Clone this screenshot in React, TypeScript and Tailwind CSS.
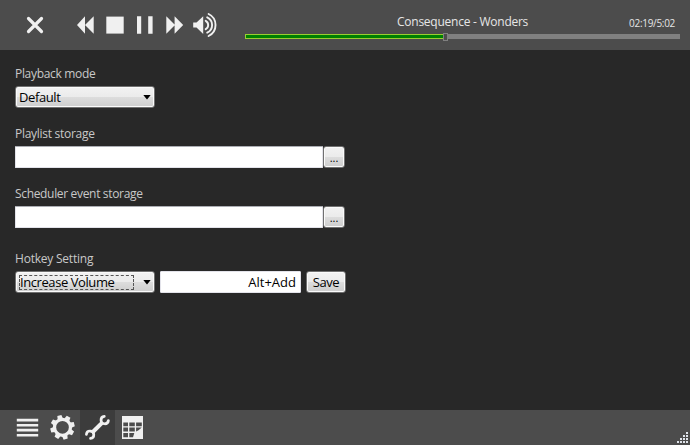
import React from "react";

const GEAR_ANGLES = [30, 75, 120, 165, 210, 255, 300, 345];

function Glyph({ w, h, children }: { w: number; h: number; children: React.ReactNode }) {
  return (
    <svg width={w} height={h} viewBox={`0 0 ${w} ${h}`} fill="#f0f0f0" className="block shrink-0">
      {children}
    </svg>
  );
}

function Label({ children, className }: { children: React.ReactNode; className: string }) {
  return <div className={`h-4 text-[12px] leading-4 whitespace-nowrap text-[#c8c8c8] ${className}`}>{children}</div>;
}

const FACE =
  "rounded-[3px] border border-[#707070] bg-[linear-gradient(#f2f2f2_0%,#ebebeb_50%,#dddddd_50%,#cdcdcd_100%)] shadow-[inset_0_0_0_1px_#fafafa] text-black";

function Combo({ text, focused, className }: { text: string; focused?: boolean; className: string }) {
  return (
    <div className={`flex h-[22px] w-[140px] items-center justify-between pr-[3px] pl-[3px] text-[13px] leading-4 ${FACE}`}>
      <div className={`flex h-[15px] w-[115px] items-center border border-dashed whitespace-nowrap ${focused ? "border-[#555]" : "border-transparent"}`}>
        <span className={className}>{text}</span>
      </div>
      <svg width="8" height="5" viewBox="0 0 8 5" className="block">
        <path d="M0.3 0H7.7L4 4.6Z" fill="#000" />
      </svg>
    </div>
  );
}

function PathRow() {
  return (
    <div className="flex h-[22px]">
      <div className="w-[308px] rounded-[1px] border border-[#e3e3ea] border-t-[#abadb3] bg-white" />
      <button className={`w-[22px] pt-px text-[11px] leading-5 ${FACE}`}>...</button>
    </div>
  );
}

export default function App() {
  return (
    <div className="flex h-[445px] w-[690px] flex-col overflow-hidden bg-[#282828] font-['Open_Sans','Noto_Sans',sans-serif]">
      <header className="flex h-[50px] shrink-0 bg-[#4c4c4c]">
        <div className="flex w-[245px] pl-5">
          <Glyph w={50} h={50}>
            <path d="M8.5 18.5L21.5 31.5M21.5 18.5L8.5 31.5" stroke="#f0f0f0" strokeWidth="3.2" strokeLinecap="round" />
          </Glyph>
          <Glyph w={30} h={50}>
            <path d="M7 25L15 16.3V33.7ZM15 25L23.7 16.3V33.7Z" />
          </Glyph>
          <Glyph w={30} h={50}>
            <path d="M6.3 16.6H23.7V33.6H6.3Z" />
          </Glyph>
          <Glyph w={30} h={50}>
            <path d="M7 16.3H11.2V33.7H7ZM18.2 16.3H22.6V33.7H18.2Z" />
          </Glyph>
          <Glyph w={30} h={50}>
            <path d="M6.3 16.3L15 25L6.3 33.7ZM14.6 16.3L23.2 25L14.6 33.7Z" />
          </Glyph>
          <Glyph w={30} h={50}>
            <path d="M3.2 22.5H6.5L13.2 16.3V33.9L6.5 27.6H3.2Z" />
            <path
              d="M15.7 20.8A4.8 4.8 0 0 1 15.7 29.2M17.2 17.3A8.5 8.5 0 0 1 17.2 32.7M18.6 14A12.2 12.2 0 0 1 18.6 36"
              fill="none"
              stroke="#f0f0f0"
              strokeWidth="1.9"
              strokeLinecap="round"
            />
          </Glyph>
        </div>
        <div className="flex w-[435px] flex-col pt-[13px]">
          <div className="flex h-5 justify-between">
            <div className="ml-[152px] text-[12px] leading-[18px] tracking-[-0.25px] whitespace-nowrap text-[#e6e6e6]">Consequence - Wonders</div>
            <div className="mr-[5px] text-[10px] leading-[21px] tracking-[-0.3px] whitespace-nowrap text-[#e6e6e6]">02:19/5:02</div>
          </div>
          <div className="flex h-2 items-center">
            <div className="mb-px h-[5px] w-[198px] border border-r-0 border-[#9acd32] bg-[#008000]" />
            <div className="h-2 w-[5px] border border-[#808080] bg-[#4c4c4c]" />
            <div className="mb-px h-[5px] flex-1 bg-[#808080]" />
          </div>
        </div>
      </header>

      <main className="flex flex-1 flex-col items-start pt-4 pl-[15px]">
        <Label className="mb-1 tracking-[-0.32px]">Playback mode</Label>
        <Combo text="Default" className="-ml-px tracking-[-0.4px]" />
        <Label className="mt-[18px] mb-1 tracking-[-0.28px]">Playlist storage</Label>
        <PathRow />
        <Label className="mt-[18px] mb-1 tracking-[-0.33px]">Scheduler event storage</Label>
        <PathRow />
        <Label className="mt-[23px] mb-1 tracking-[-0.22px]">Hotkey Setting</Label>
        <div className="flex h-[22px]">
          <Combo text="Increase Volume" focused className="tracking-[-0.42px]" />
          <div className="ml-[5px] w-[141px] rounded-[1px] border border-[#e3e3ea] bg-white pr-1 text-right text-[13px] leading-[21px] text-black">Alt+Add</div>
          <button className={`ml-[5px] w-10 text-center text-[13px] leading-5 tracking-[-0.4px] ${FACE}`}>Save</button>
        </div>
      </main>

      <footer className="flex h-[35px] shrink-0 bg-[#4c4c4c] pl-[10px]">
        <Glyph w={35} h={35}>
          <path d="M6.8 8.8H28.2V11.4H6.8ZM6.8 13.9H28.2V16.5H6.8ZM6.8 18.8H28.2V21.4H6.8ZM6.8 23.9H28.2V26.5H6.8Z" />
        </Glyph>
        <Glyph w={35} h={35}>
          <circle cx="17.5" cy="17.3" r="8" fill="none" stroke="#f0f0f0" strokeWidth="3.3" />
          {GEAR_ANGLES.map((a) => (
            <path key={a} d="M14.8 8.8L15.4 5.1H19.6L20.2 8.8Z" transform={`rotate(${a} 17.5 17.3)`} />
          ))}
        </Glyph>
        <div className="bg-[#3c3c3c]">
          <Glyph w={35} h={35}>
            <path d="M12.3 22.5L22.5 12.3" stroke="#f0f0f0" strokeWidth="4" />
            <path
              d="M24.3 6.4A3.7 3.7 0 1 0 28.4 10.5M10.5 28.4A3.7 3.7 0 1 0 6.4 24.3"
              fill="none"
              stroke="#f0f0f0"
              strokeWidth="2.7"
              strokeLinecap="round"
            />
          </Glyph>
        </div>
        <Glyph w={35} h={35}>
          <path d="M7 6H28V29H7Z" />
          <path d="M8.3 12.5H13V16.2H8.3ZM14.3 12.5H19.8V16.2H14.3ZM21.1 12.5H26.8V16.2H21.1ZM8.3 17.6H13V21.5H8.3ZM14.3 17.6H19.8V21.5H14.3ZM21.1 17.6H26.8L23.5 20.3L21.1 21.5ZM8.3 22.9H13V27.3H8.3ZM14.3 22.9H19.3L18 27.3H14.3Z" fill="#4c4c4c" />
        </Glyph>
        <svg width="12" height="12" viewBox="0 0 12 12" className="mt-[22px] mr-px ml-auto block">
          <path d="M9 0h2v2h-2zM6 3h2v2h-2zM9 3h2v2h-2zM3 6h2v2h-2zM6 6h2v2h-2zM9 6h2v2h-2zM0 9h2v2h-2zM3 9h2v2h-2zM6 9h2v2h-2zM9 9h2v2h-2z" fill="#dfe3ea" />
        </svg>
      </footer>
    </div>
  );
}
